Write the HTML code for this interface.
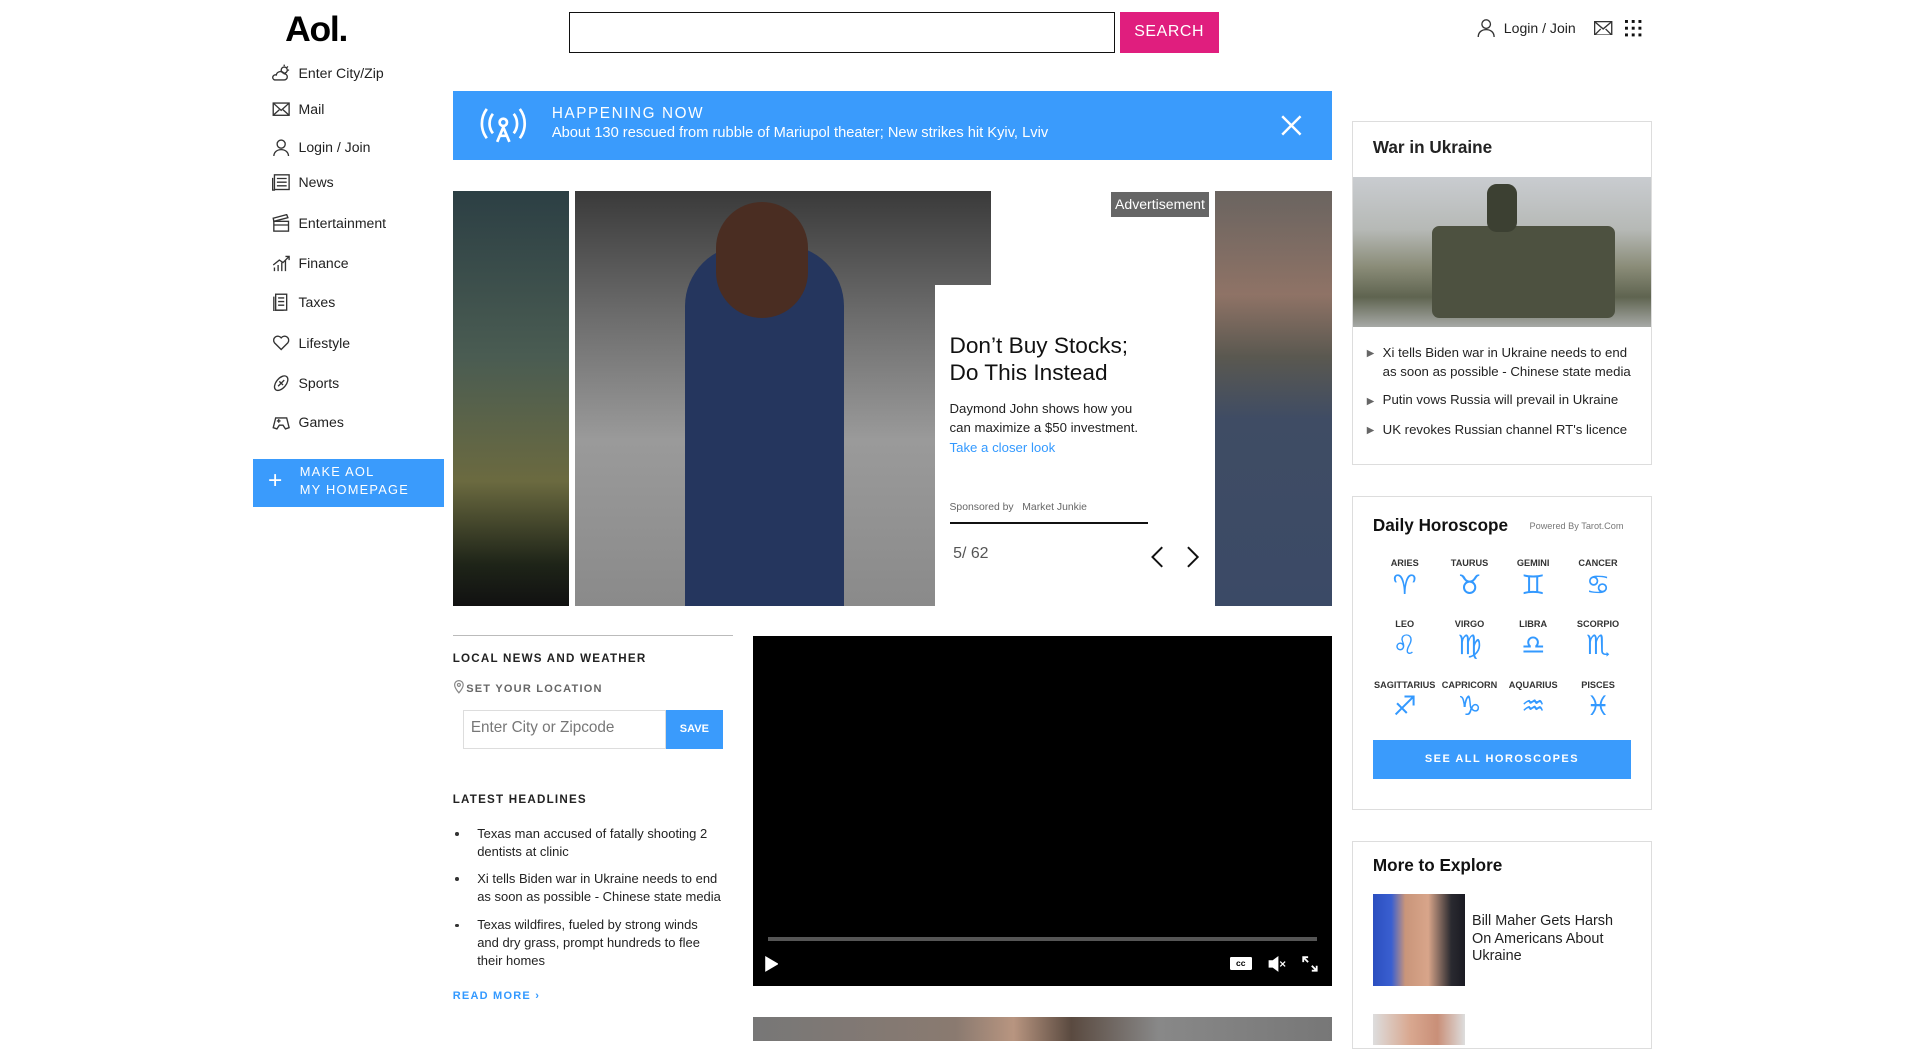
<!DOCTYPE html>
<html><head><meta charset="utf-8"><style>
html{zoom:1.2236}
*{box-sizing:border-box;margin:0;padding:0}
body{width:1570px;height:850px;overflow:hidden;background:#fff;font-family:"Liberation Sans","DejaVu Sans",sans-serif;color:#222;position:relative}
.a{position:absolute}
.nav{position:absolute;left:222px;font-size:11.5px;color:#222;display:flex;align-items:center;gap:7px;height:16px}
.nav svg{width:15px;height:15px;stroke:#333;fill:none;stroke-width:1.1}
.cap{font-size:9.5px;font-weight:bold;letter-spacing:1px;color:#222}
.hl{position:absolute;left:390px;white-space:nowrap;font-size:10.6px;line-height:14.6px;color:#222}
.hl:before{content:"";position:absolute;left:-18px;top:6px;width:3px;height:3px;border-radius:50%;background:#333}
.box{position:absolute;left:1105px;width:245px;border:1px solid #ddd;background:#fff}
.wb{position:absolute;left:1130px;font-size:10.8px;line-height:16px;color:#222;width:210px}
.wb:before{content:"▶";position:absolute;left:-13px;font-size:8px;color:#666;top:1px}
.zn{position:absolute;width:60px;text-align:center;font-size:7.5px;font-weight:bold;color:#333}
.zs{position:absolute;width:60px;text-align:center;font-size:22px;color:#3399ff;font-family:"DejaVu Sans",sans-serif;line-height:22px}
</style></head><body>

<div class="a" style="left:233px;top:7px;font-size:29px;font-weight:900;letter-spacing:-1px;color:#000">Aol.</div>
<div class="a" style="left:465px;top:10px;width:446px;height:33px;border:1.5px solid #111"></div>
<div class="a" style="left:915px;top:10px;width:81px;height:33px;background:#e01e7e;color:#fff;font-size:13px;text-align:center;line-height:33px;letter-spacing:.5px">SEARCH</div>

<svg class="a" style="left:1207px;top:15px" width="15" height="16" viewBox="0 0 15 16" fill="none" stroke="#333" stroke-width="1.1"><circle cx="7.5" cy="5" r="3.5"/><path d="M1 15.5c0-4 3-6 6.5-6s6.5 2 6.5 6"/></svg>
<div class="a" style="left:1229px;top:16px;font-size:11.5px;color:#222">Login / Join</div>
<svg class="a" style="left:1303px;top:17px" width="15" height="12" viewBox="0 0 15 12" fill="none" stroke="#333" stroke-width="1.1"><rect x=".5" y=".5" width="14" height="11"/><path d="M.5 .5l7 6 7-6M.5 11.5l5-5M14.5 11.5l-5-5"/></svg>
<svg class="a" style="left:1328px;top:16px" width="14" height="14" viewBox="0 0 14 14" fill="#111"><rect x="0" y="0" width="2.4" height="2.4"/><rect x="5.5" y="0" width="2.4" height="2.4"/><rect x="11" y="0" width="2.4" height="2.4"/><rect x="0" y="5.5" width="2.4" height="2.4"/><rect x="5.5" y="5.5" width="2.4" height="2.4"/><rect x="11" y="5.5" width="2.4" height="2.4"/><rect x="0" y="11" width="2.4" height="2.4"/><rect x="5.5" y="11" width="2.4" height="2.4"/><rect x="11" y="11" width="2.4" height="2.4"/></svg>

<!-- left nav -->
<div class="nav" style="top:52px"><svg viewBox="0 0 15 15"><path d="M2 13h8a2.5 2.5 0 0 0 0-5 3.5 3.5 0 0 0-6.5 1A2 2 0 0 0 2 13z"/><circle cx="10" cy="5" r="2.5"/><path d="M10 0.5v1.2M14 5h-1.2M13 2l-1 1"/></svg>Enter City/Zip</div>
<div class="nav" style="top:81px"><svg viewBox="0 0 15 15"><rect x="1" y="2.5" width="13" height="10"/><path d="M1 2.5l6.5 6 6.5-6M1 12.5l5-4.5M14 12.5l-5-4.5"/></svg>Mail</div>
<div class="nav" style="top:112px"><svg viewBox="0 0 15 15"><circle cx="7.5" cy="5" r="3.3"/><path d="M1.5 15c0-3.5 2.7-5.5 6-5.5s6 2 6 5.5"/></svg>Login / Join</div>
<div class="nav" style="top:141px"><svg viewBox="0 0 15 15"><rect x="2" y="1.5" width="12" height="12"/><path d="M.5 4v10h2M4 4.5h8M4 7.5h8M4 10.5h8"/></svg>News</div>
<div class="nav" style="top:174px"><svg viewBox="0 0 15 15"><rect x="1.5" y="6" width="12" height="8"/><path d="M1.5 6l11.5-3-1-2.5L1 3.5z M1.5 9h12"/></svg>Entertainment</div>
<div class="nav" style="top:207px"><svg viewBox="0 0 15 15"><path d="M2 14v-3M5 14v-5M8 14v-7M11 14v-9M1 9l5-4 3 2 5-5M11 2h3v3"/></svg>Finance</div>
<div class="nav" style="top:239px"><svg viewBox="0 0 15 15"><rect x="3" y="1" width="9" height="13"/><path d="M5 4h5M5 7h5M5 10h5M1.5 3v12h8"/></svg>Taxes</div>
<div class="nav" style="top:272px"><svg viewBox="0 0 15 15"><path d="M7.5 13.5L2 8a3.2 3.2 0 0 1 5.5-4 3.2 3.2 0 0 1 5.5 4z"/></svg>Lifestyle</div>
<div class="nav" style="top:305px"><svg viewBox="0 0 15 15"><ellipse cx="7.5" cy="7.5" rx="4" ry="7" transform="rotate(40 7.5 7.5)"/><path d="M5 10l5-5M6 6l3 3"/></svg>Sports</div>
<div class="nav" style="top:337px"><svg viewBox="0 0 15 15"><path d="M3 4h9l2 8-3 1-2-3H6l-2 3-3-1z"/><path d="M4 6.5h3M5.5 5v3"/></svg>Games</div>

<div class="a" style="left:207px;top:375px;width:156px;height:39px;background:#3a9bfc;color:#fff">
 <div class="a" style="left:12px;top:7px;font-size:20px;font-weight:300">+</div>
 <div class="a" style="left:38px;top:3px;font-size:10.5px;letter-spacing:1px;line-height:15.5px">MAKE AOL<br>MY HOMEPAGE</div>
</div>

<!-- banner -->
<div class="a" style="left:370px;top:74px;width:719px;height:57px;background:#3a9bfc;color:#fff">
 <svg class="a" style="left:20px;top:11px" width="43" height="35" viewBox="0 0 43 35" fill="none" stroke="#fff" stroke-width="2.2"><path d="M8 4a20 20 0 0 0 0 24M35 4a20 20 0 0 1 0 24M13 8a13 13 0 0 0 0 16M30 8a13 13 0 0 1 0 16"/><circle cx="21.5" cy="15" r="3"/><path d="M21.5 19l-5 12M21.5 19l5 12M18 26h7"/></svg>
 <div class="a" style="left:81px;top:12px;font-size:12.5px;letter-spacing:1.3px">HAPPENING NOW</div>
 <div class="a" style="left:81px;top:28px;font-size:12px">About 130 rescued from rubble of Mariupol theater; New strikes hit Kyiv, Lviv</div>
 <svg class="a" style="left:677px;top:20px" width="17" height="17" viewBox="0 0 17 17" stroke="#fff" stroke-width="2"><path d="M1 1l15 15M16 1L1 16"/></svg>
</div>

<!-- carousel -->
<div class="a" style="left:370px;top:156px;width:95px;height:339px;background:linear-gradient(180deg,#2c3f44 0%,#4a5c52 40%,#6b6a40 70%,#1e2418 90%,#111 100%)"></div>
<div class="a" style="left:470px;top:156px;width:340px;height:339px;background:linear-gradient(180deg,#3a3a3a 0%,#6c6c6c 30%,#9a9a9a 60%,#8a8a8a 100%)"></div>
<div class="a" style="left:560px;top:200px;width:130px;height:295px;background:#25365e;border-radius:50px 50px 0 0"></div>
<div class="a" style="left:585px;top:165px;width:75px;height:95px;background:#4a2d22;border-radius:40px"></div>
<div class="a" style="left:764px;top:233px;width:229px;height:262px;background:#fff"></div>
<div class="a" style="left:993px;top:156px;width:96px;height:339px;background:linear-gradient(180deg,#6a6460 0%,#8f7366 25%,#5a5850 40%,#3f4c64 55%,#3b4a66 100%)"></div>
<div class="a" style="left:908px;top:157px;width:80px;height:20px;background:#666;color:#fff;font-size:11.5px;text-align:center;line-height:20px">Advertisement</div>
<div class="a" style="left:776px;top:272px;font-size:18.5px;line-height:22px;color:#111">Don’t Buy Stocks;<br>Do This Instead</div>
<div class="a" style="left:776px;top:326px;font-size:10.8px;line-height:16px;color:#222">Daymond John shows how you<br>can maximize a $50 investment.<br><span style="color:#3399ff">Take a closer look</span></div>
<div class="a" style="left:776px;top:410px;font-size:8.5px;color:#666">Sponsored by &nbsp;&nbsp;Market Junkie</div>
<div class="a" style="left:776px;top:427px;width:162px;height:1px;background:#111"></div>
<div class="a" style="left:779px;top:445px;font-size:13px;color:#555">5/ 62</div>
<svg class="a" style="left:940px;top:446px" width="45" height="18" viewBox="0 0 45 18" fill="none" stroke="#111" stroke-width="1.6"><path d="M10 1l-8 8 8 8M31 1l8 8-8 8"/></svg>

<!-- local news -->
<div class="a" style="left:370px;top:519px;width:229px;height:1px;background:#bbb"></div>
<div class="a cap" style="left:370px;top:533px">LOCAL NEWS AND WEATHER</div>
<svg class="a" style="left:371px;top:556px" width="8" height="11" viewBox="0 0 8 11" fill="none" stroke="#888"><path d="M4 10.5S.5 6.5.5 4a3.5 3.5 0 0 1 7 0C7.5 6.5 4 10.5 4 10.5z"/><circle cx="4" cy="4" r="1.2"/></svg>
<div class="a" style="left:381px;top:558px;font-size:9px;font-weight:bold;letter-spacing:1px;color:#666">SET YOUR LOCATION</div>
<div class="a" style="left:378px;top:580px;width:166px;height:32px;border:1px solid #ddd;font-size:12.5px;color:#777;padding:7px 6px">Enter City or Zipcode</div>
<div class="a" style="left:544px;top:580px;width:47px;height:32px;background:#3a9bfc;color:#fff;font-size:9px;font-weight:bold;text-align:center;line-height:32px">SAVE</div>
<div class="a cap" style="left:370px;top:648px">LATEST HEADLINES</div>
<div class="hl" style="top:674px">Texas man accused of fatally shooting 2<br>dentists at clinic</div>
<div class="hl" style="top:711px">Xi tells Biden war in Ukraine needs to end<br>as soon as possible - Chinese state media</div>
<div class="hl" style="top:749px">Texas wildfires, fueled by strong winds<br>and dry grass, prompt hundreds to flee<br>their homes</div>
<div class="a" style="left:370px;top:809px;font-size:9px;font-weight:bold;letter-spacing:1px;color:#3399ff">READ MORE ›</div>

<!-- video -->
<div class="a" style="left:615px;top:520px;width:474px;height:286px;background:#000"></div>
<div class="a" style="left:628px;top:766px;width:448px;height:3px;background:#555"></div>
<svg class="a" style="left:624px;top:781px" width="12" height="13" viewBox="0 0 12 13" fill="#fff"><path d="M1 0l11 6.5L1 13z"/></svg>
<div class="a" style="left:1005px;top:782px;width:18px;height:11px;background:#fff;border-radius:1px;font-size:7px;font-weight:bold;text-align:center;line-height:11px;color:#000">cc</div>
<svg class="a" style="left:1036px;top:781px" width="15" height="13" viewBox="0 0 15 13" fill="#fff" stroke="#fff"><path d="M1 4h3l4-3v11l-4-3H1z"/><path d="M10 4.5l4 4M14 4.5l-4 4" fill="none"/></svg>
<svg class="a" style="left:1064px;top:781px" width="13" height="13" viewBox="0 0 13 13" fill="none" stroke="#fff" stroke-width="1.5"><path d="M1 5V1h4M1 1l4 4M12 8v4H8M12 12L8 8"/></svg>
<div class="a" style="left:615px;top:831px;width:474px;height:20px;background:linear-gradient(90deg,#777,#8a7a70 35%,#b89580 45%,#5a4a40 55%,#888 70%,#777)"></div>

<!-- war in ukraine -->
<div class="box" style="top:99px;height:281px"></div>
<div class="a" style="left:1122px;top:112px;font-size:14px;font-weight:bold;color:#222">War in Ukraine</div>
<div class="a" style="left:1106px;top:145px;width:243px;height:122px;background:linear-gradient(180deg,#c9ccd0 0%,#b6b9b6 35%,#8a8c78 60%,#5f6450 80%,#a7a9a6 100%)"></div>
<div class="a" style="left:1170px;top:185px;width:150px;height:75px;background:#4d5140;border-radius:6px"></div>
<div class="a" style="left:1215px;top:150px;width:25px;height:40px;background:#3c4032;border-radius:8px"></div>
<div class="wb" style="top:280px">Xi tells Biden war in Ukraine needs to end as soon as possible - Chinese state media</div>
<div class="wb" style="top:319px">Putin vows Russia will prevail in Ukraine</div>
<div class="wb" style="top:343px">UK revokes Russian channel RT's licence</div>

<!-- horoscope -->
<div class="box" style="top:405px;height:257px"></div>
<div class="a" style="left:1122px;top:421px;font-size:14px;font-weight:bold;color:#111">Daily Horoscope</div>
<div class="a" style="left:1250px;top:426px;font-size:7.5px;color:#777">Powered By Tarot.Com</div>
<div class="zn" style="left:1118px;top:456px">ARIES</div><div class="zn" style="left:1171px;top:456px">TAURUS</div><div class="zn" style="left:1223px;top:456px">GEMINI</div><div class="zn" style="left:1276px;top:456px">CANCER</div>
<div class="zs" style="left:1118px;top:468px">♈&#xFE0E;</div><div class="zs" style="left:1171px;top:468px">♉&#xFE0E;</div><div class="zs" style="left:1223px;top:468px">♊&#xFE0E;</div><div class="zs" style="left:1276px;top:468px">♋&#xFE0E;</div>
<div class="zn" style="left:1118px;top:506px">LEO</div><div class="zn" style="left:1171px;top:506px">VIRGO</div><div class="zn" style="left:1223px;top:506px">LIBRA</div><div class="zn" style="left:1276px;top:506px">SCORPIO</div>
<div class="zs" style="left:1118px;top:517px">♌&#xFE0E;</div><div class="zs" style="left:1171px;top:517px">♍&#xFE0E;</div><div class="zs" style="left:1223px;top:517px">♎&#xFE0E;</div><div class="zs" style="left:1276px;top:517px">♏&#xFE0E;</div>
<div class="zn" style="left:1118px;top:556px">SAGITTARIUS</div><div class="zn" style="left:1171px;top:556px">CAPRICORN</div><div class="zn" style="left:1223px;top:556px">AQUARIUS</div><div class="zn" style="left:1276px;top:556px">PISCES</div>
<div class="zs" style="left:1118px;top:567px">♐&#xFE0E;</div><div class="zs" style="left:1171px;top:567px">♑&#xFE0E;</div><div class="zs" style="left:1223px;top:567px">♒&#xFE0E;</div><div class="zs" style="left:1276px;top:567px">♓&#xFE0E;</div>
<div class="a" style="left:1122px;top:605px;width:211px;height:32px;background:#3a9bfc;color:#fff;font-size:9px;font-weight:bold;letter-spacing:1.2px;text-align:center;line-height:32px">SEE ALL HOROSCOPES</div>

<!-- more to explore -->
<div class="box" style="top:687px;height:170px"></div>
<div class="a" style="left:1122px;top:699px;font-size:14px;font-weight:bold;color:#111">More to Explore</div>
<div class="a" style="left:1122px;top:731px;width:75px;height:75px;background:linear-gradient(90deg,#2b4fc0 0%,#3a5fd0 20%,#c9957a 35%,#d8a58a 60%,#2a2a30 85%,#1a1a22 100%)"></div>
<div class="a" style="left:1203px;top:746px;font-size:11.8px;line-height:14.5px;color:#222;width:125px">Bill Maher Gets Harsh On Americans About Ukraine</div>
<div class="a" style="left:1122px;top:829px;width:75px;height:25px;background:linear-gradient(90deg,#ddd,#d9a890 40%,#c98f78 70%,#ddd)"></div>
</body></html>
